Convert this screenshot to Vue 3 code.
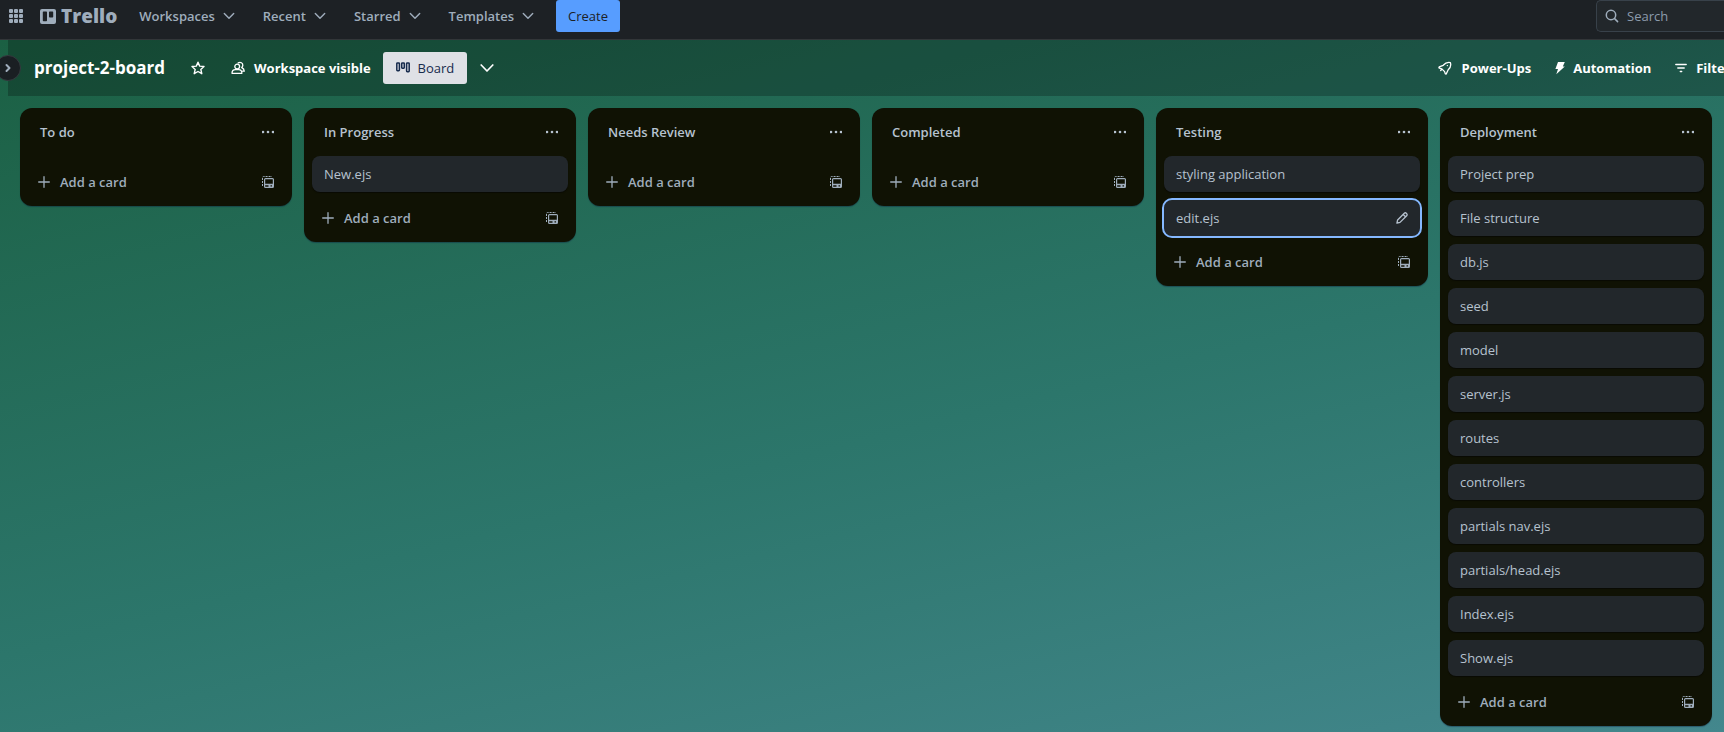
<script setup>
const menus = ['Workspaces', 'Recent', 'Starred', 'Templates']

const lists = [
  { title: 'To do', cards: [] },
  { title: 'In Progress', cards: ['New.ejs'] },
  { title: 'Needs Review', cards: [] },
  { title: 'Completed', cards: [] },
  { title: 'Testing', cards: ['styling application', 'edit.ejs'] },
  {
    title: 'Deployment',
    cards: [
      'Project prep', 'File structure', 'db.js', 'seed', 'model', 'server.js',
      'routes', 'controllers', 'partials nav.ejs', 'partials/head.ejs', 'Index.ejs', 'Show.ejs',
    ],
  },
]

const selected = 'edit.ejs'
const dots = [0, 5, 10]
</script>

<template>
  <div class="app">
    <header class="topbar">
      <button class="apps" aria-label="More from Atlassian">
        <svg width="14" height="14" viewBox="0 0 14 14" fill="currentColor">
          <template v-for="y in dots" :key="y">
            <rect v-for="x in dots" :key="x" :x="x" :y="y" width="4" height="4" rx="1" />
          </template>
        </svg>
      </button>
      <a class="brand" href="#">
        <svg width="16" height="15" viewBox="0 0 16 15">
          <path fill="currentColor" fill-rule="evenodd" d="M2 0h12a2 2 0 0 1 2 2v11a2 2 0 0 1-2 2H2a2 2 0 0 1-2-2V2a2 2 0 0 1 2-2ZM3.500 2.500a.7.7 0 0 0-.7.7v8.300c0 .4.300.7.7.7h2.800c.4 0 .7-.3.7-.7V3.200a.7.7 0 0 0-.7-.7Zm6.200 0a.7.7 0 0 0-.7.7v4.600c0 .4.300.7.7.7h2.800c.4 0 .7-.3.7-.7V3.200a.7.7 0 0 0-.7-.7Z" />
        </svg>
        <span>Trello</span>
      </a>
      <nav class="menus">
        <button v-for="menu in menus" :key="menu" class="menu">
          {{ menu }}
          <svg width="12" height="8" viewBox="0 0 12 8" fill="none" stroke="currentColor" stroke-width="1.400" stroke-linecap="round" stroke-linejoin="round">
            <path d="M1.300 1.500 6 6.300l4.700-4.800" />
          </svg>
        </button>
      </nav>
      <button class="create">Create</button>
      <label class="search">
        <svg width="14" height="14" viewBox="0 0 14 14" fill="none" stroke="currentColor" stroke-width="1.500" stroke-linecap="round">
          <circle cx="6" cy="6" r="4.700" />
          <path d="m9.600 9.600 3 3" />
        </svg>
        <input type="text" placeholder="Search" aria-label="Search" />
      </label>
    </header>

    <main class="workspace">
      <div class="boardbar">
        <button class="expand" aria-label="Expand sidebar">
          <svg width="6" height="10" viewBox="0 0 6 10" fill="none" stroke="currentColor" stroke-width="2" stroke-linecap="round" stroke-linejoin="round">
            <path d="m1.500 2 3 3-3 3" />
          </svg>
        </button>
        <h1>project-2-board</h1>
        <button class="star" aria-label="Star board">
          <svg width="14" height="14" viewBox="0 0 14 14" fill="none" stroke="currentColor" stroke-width="1.400" stroke-linejoin="round">
            <path d="m7 1.200 1.700 3.900 4.300.4-3.200 2.900 1 4.300L7 10.500l-3.800 2.200 1-4.300L1 5.500l4.300-.4Z" />
          </svg>
        </button>
        <button class="tool visibility">
          <svg width="14" height="14" viewBox="0 0 14 14" fill="none" stroke="currentColor" stroke-width="1.300" stroke-linecap="round" stroke-linejoin="round">
            <circle cx="6.200" cy="5.600" r="2.400" />
            <path d="M1 12.300c0-2.200 1.500-3.600 3.400-3.600h3.200c2 0 3.300 1.400 3.300 3.600ZM7.200 1.900c2.200-1.300 4.800.1 4.600 2.500-.1 1-.5 1.700-1.100 2.200 1.500.6 2.500 1.800 2.600 3.600h-1.700" />
          </svg>
          Workspace visible
        </button>
        <button class="view">
          <svg width="14" height="12" viewBox="0 0 14 12" fill="none" stroke="currentColor" stroke-width="1.500">
            <rect x="0.800" y="1" width="2.600" height="7.700" rx="0.600" />
            <rect x="5.700" y="1" width="2.600" height="5.200" rx="0.600" />
            <rect x="10.600" y="1" width="2.600" height="8.700" rx="0.600" />
          </svg>
          Board
        </button>
        <button class="more" aria-label="Customize views">
          <svg width="14" height="10" viewBox="0 0 14 10" fill="none" stroke="currentColor" stroke-width="1.700" stroke-linecap="round" stroke-linejoin="round">
            <path d="M1.200 2 7 8l5.800-6" />
          </svg>
        </button>
        <div class="tools">
          <button class="tool powerups">
            <svg width="14" height="14" viewBox="0 0 14 14" fill="none" stroke="currentColor" stroke-width="1.300" stroke-linecap="round" stroke-linejoin="round">
              <path d="M12.400 1.600C9.700 1 7.200 2 5.200 4.300L1.200 5.900l-.3.900 3.200 1.300 2.500 2.500.7 2.300.9.200 2-4.300c2.400-2.100 3-4.500 2.200-7.200Z" />
              <path d="M9.300 4.600h.1M3.700 8.300l-1 1.200" />
            </svg>
            Power-Ups
          </button>
          <button class="tool automation">
            <svg width="10" height="14" viewBox="0 0 10 14" fill="currentColor">
              <path d="M3 1h6.800L7.800 5.400h2L1.300 13.300 3 8H.4Z" />
            </svg>
            Automation
          </button>
          <button class="tool filters">
            <svg width="12" height="10" viewBox="0 0 12 10" fill="none" stroke="currentColor" stroke-width="1.400" stroke-linecap="round">
              <path d="M.8 1.500h10.400M2.800 5h6.400M5.300 8.500h1.400" />
            </svg>
            Filters
          </button>
        </div>
      </div>

      <div class="lists">
        <section v-for="list in lists" :key="list.title" class="list">
          <div class="listhead">
            <h2>{{ list.title }}</h2>
            <button class="icon" aria-label="List actions">
              <svg width="12" height="4" viewBox="0 0 12 4" fill="currentColor">
                <circle v-for="x in [1, 6, 11]" :key="x" :cx="x" cy="2" r="1.300" />
              </svg>
            </button>
          </div>
          <ul v-if="list.cards.length" class="cards">
            <li v-for="card in list.cards" :key="card">
              <a href="#" class="card" :class="{ selected: card === selected }">
                {{ card }}
                <svg v-if="card === selected" width="12" height="12" viewBox="0 0 12 12" fill="none" stroke="currentColor" stroke-width="1.300" stroke-linejoin="round">
                  <path d="M.9 11.100 1.600 8 8.300 1.300c.6-.6 1.400-.6 2 0l.4.4c.6.6.6 1.400 0 2L4 10.400ZM7.200 2.500l2.300 2.300" />
                </svg>
              </a>
            </li>
          </ul>
          <div class="listfoot">
            <button class="add">
              <svg width="12" height="12" viewBox="0 0 12 12" fill="none" stroke="currentColor" stroke-width="1.300" stroke-linecap="round">
                <path d="M6 .7v10.600M.7 6h10.600" />
              </svg>
              Add a card
            </button>
            <button class="icon" aria-label="Create from template">
              <svg width="12" height="12" viewBox="0 0 12 12">
                <path fill="none" stroke="currentColor" stroke-dasharray="2 1" d="M.5 10V1.500c0-.6.4-1 1-1H10" />
                <path fill="currentColor" fill-rule="evenodd" d="M3.500 2h7A1.500 1.500 0 0 1 12 3.500v7a1.500 1.500 0 0 1-1.500 1.500h-7A1.500 1.500 0 0 1 2 10.500v-7A1.500 1.500 0 0 1 3.500 2ZM3.200 3.200v4.600h7.600V3.200Zm0 6v1.500h3.300V9.200Zm5.300 0v1.200H10V9.200Z" />
              </svg>
            </button>
          </div>
        </section>
      </div>
    </main>
  </div>
</template>

<style>
body {
  margin: 0;
  overflow: hidden;
}
</style>

<style scoped>
.app {
  display: flex;
  flex-direction: column;
  min-height: 100vh;
  overflow: hidden;
  font: 400 13px/20px "Segoe UI", "Open Sans", "Noto Sans", sans-serif;
  color: #b6c2cf;
}
button,
input {
  margin: 0;
  padding: 0;
  border: 0;
  background: none;
  color: inherit;
  font: inherit;
}
button,
a {
  cursor: pointer;
  white-space: nowrap;
}
a {
  color: inherit;
  text-decoration: none;
}
svg {
  display: block;
  flex: none;
}
h1,
h2,
ul {
  margin: 0;
  padding: 0;
}

.topbar {
  display: flex;
  align-items: center;
  box-sizing: border-box;
  height: 40px;
  padding: 0 0 7px 9px;
  border-bottom: 1px solid #323639;
  background: #1d2125;
  color: #9fadbc;
}
.brand {
  display: flex;
  align-items: center;
  gap: 5px;
  margin-left: 17px;
  font-size: 19px;
  font-weight: 800;
  line-height: 32px;
}
.menus {
  display: flex;
  gap: 28px;
  margin-left: 22px;
}
.menu {
  display: flex;
  align-items: center;
  gap: 8px;
  height: 32px;
  font-weight: 600;
}
.create {
  height: 32px;
  margin-left: 22px;
  padding: 0 12px;
  border-radius: 3px;
  background: #579dff;
  color: #1d2125;
}
.search {
  display: flex;
  align-items: center;
  gap: 8px;
  box-sizing: border-box;
  width: 128px;
  height: 32px;
  margin-left: auto;
  padding-left: 8px;
  border: 1px solid #38414a;
  border-right: 0;
  border-radius: 5px 0 0 5px;
  background: #22272b;
}
.search input {
  flex: 1;
  min-width: 0;
  outline: 0;
}
.search input::placeholder {
  color: #8c9bab;
  opacity: 1;
}

.workspace {
  flex: 1;
  display: flex;
  flex-direction: column;
  padding-left: 8px;
  background: linear-gradient(166deg, #1b6043 0%, #2c766b 55%, #43878d 100%);
}
.boardbar {
  display: flex;
  align-items: center;
  height: 56px;
  background: rgba(0, 0, 0, 0.24);
  color: #fff;
}
.expand {
  display: grid;
  place-items: center;
  box-sizing: border-box;
  width: 26px;
  height: 26px;
  margin-left: -13px;
  border: 1px solid #343a3f;
  border-radius: 50%;
  background: #1a1f23;
  color: #9fadbc;
}
h1 {
  margin-left: 13px;
  font-size: 17px;
  font-weight: 700;
  line-height: 32px;
  white-space: nowrap;
}
.star {
  margin-left: 26px;
}
.tool {
  display: flex;
  align-items: center;
  gap: 10px;
  height: 32px;
  font-weight: 700;
}
.visibility {
  gap: 9px;
  margin-left: 26px;
}
.view {
  display: flex;
  align-items: center;
  gap: 8px;
  height: 32px;
  margin-left: 12px;
  padding: 0 13px;
  border-radius: 3px;
  background: #dfe1e6;
  color: #172b4d;
}
.more {
  margin-left: 13px;
}
.tools {
  display: flex;
  gap: 24px;
  margin-left: auto;
  margin-right: -13px;
}
.automation {
  gap: 8px;
}
.filters {
  gap: 9px;
}

.lists {
  display: flex;
  align-items: flex-start;
  gap: 12px;
  padding: 12px 12px 6px;
}
.list {
  flex: none;
  box-sizing: border-box;
  width: 272px;
  padding: 0 8px 8px;
  border-radius: 12px;
  background: #101204;
  box-shadow: 0 1px 1px rgba(9, 30, 66, 0.4);
}
.listhead {
  display: flex;
  align-items: center;
  justify-content: space-between;
  height: 48px;
  padding-left: 12px;
}
h2 {
  font-size: 13px;
  font-weight: 600;
}
.icon {
  display: grid;
  place-items: center;
  width: 32px;
  height: 32px;
}
.cards {
  display: grid;
  gap: 8px;
  list-style: none;
}
.card {
  display: flex;
  align-items: center;
  justify-content: space-between;
  height: 36px;
  padding: 0 12px;
  border-radius: 8px;
  background: #22272b;
  box-shadow: 0 1px 1px rgba(3, 4, 4, 0.5);
}
.selected {
  outline: 2px solid #85b8ff;
}
.listfoot {
  display: flex;
  justify-content: space-between;
  padding-top: 10px;
  color: #9fadbc;
}
.add {
  display: flex;
  align-items: center;
  gap: 10px;
  padding-left: 10px;
  font-weight: 600;
}
</style>
